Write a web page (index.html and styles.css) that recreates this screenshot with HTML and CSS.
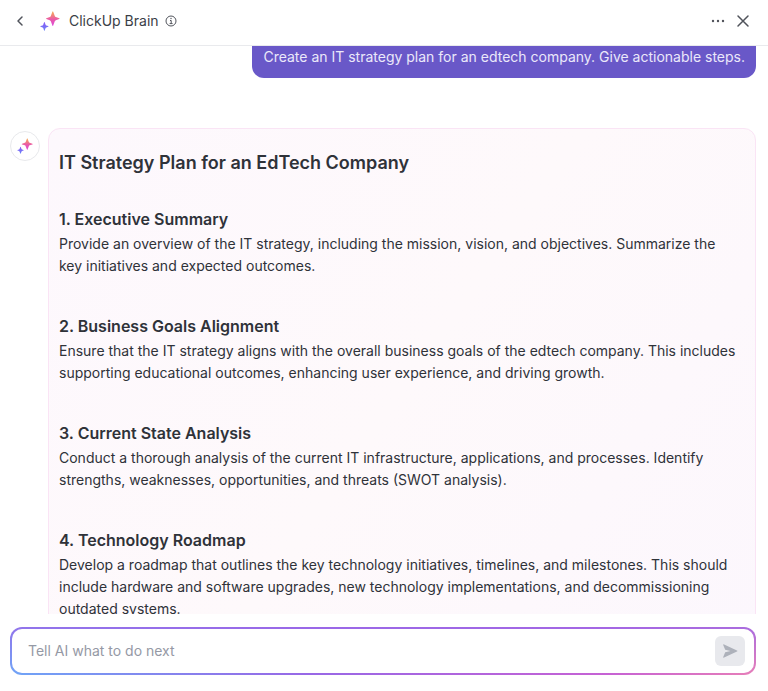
FILE: index.html
```html
<!DOCTYPE html>
<html lang="en">
<head>
    <meta charset="UTF-8">
    <meta name="viewport" content="width=device-width, initial-scale=1.0">
    <title>ClickUp Brain</title>
    <link rel="stylesheet" href="styles.css">
</head>
<body>
    <header class="panel-header">
        <button class="icon-btn" type="button" aria-label="Back">
            <svg width="16" height="16" viewBox="0 0 16 16" fill="none" stroke="currentColor" stroke-width="1.5" stroke-linecap="round" stroke-linejoin="round"><path d="M10 4 6 8l4 4"/></svg>
        </button>
        <svg class="brain-logo" width="20" height="20" viewBox="0 0 20 20" aria-hidden="true">
            <defs>
                <linearGradient id="star-warm" x1="0" y1="0" x2="0" y2="1">
                    <stop offset="0.1" stop-color="#f5a05f"/>
                    <stop offset="0.55" stop-color="#ea5aa8"/>
                    <stop offset="1" stop-color="#dd48dc"/>
                </linearGradient>
                <linearGradient id="star-cool" x1="0" y1="0" x2="0" y2="1">
                    <stop offset="0" stop-color="#8a58f5"/>
                    <stop offset="1" stop-color="#6a83f8"/>
                </linearGradient>
            </defs>
            <path fill="url(#star-warm)" d="M12.4.8q.4-1 .8 0l1.6 4.1q.3.8 1.1 1.1l3.3 1.2q1 .4 0 .8l-3.3 1.2q-.8.3-1.1 1.1l-1.6 4.1q-.4 1-.8 0l-1.6-4.1q-.3-.8-1.1-1.1L6.400 8q-1-.4 0-.8L9.700 6q.8-.3 1.100-1.100z"/>
            <path fill="url(#star-cool)" d="M4.100 11.300q.3-.7.6 0l.9 2.400q.2.500.7.700l1.800.7q.8.300 0 .600l-1.800.700q-.5.200-.7.700l-.9 2.400q-.3.700-.6 0l-.9-2.400q-.2-.5-.7-.7l-1.800-.7q-.8-.3 0-.600l1.800-.7q.5-.2.700-.700z"/>
        </svg>
        <h1 class="panel-title">ClickUp Brain</h1>
        <svg class="info-icon" width="12" height="12" viewBox="0 0 12 12" fill="none" stroke="currentColor" aria-hidden="true">
            <circle cx="6" cy="6" r="5"/>
            <path d="M5 5.500h1.200v3M4.600 8.600h3" />
            <circle cx="6" cy="3.500" r=".7" fill="currentColor" stroke="none"/>
        </svg>
        <div class="header-actions">
            <button class="icon-btn" type="button" aria-label="More options">
                <svg width="16" height="16" viewBox="0 0 16 16" fill="currentColor"><circle cx="3" cy="8" r="1.200"/><circle cx="8" cy="8" r="1.200"/><circle cx="13" cy="8" r="1.200"/></svg>
            </button>
            <button class="icon-btn" type="button" aria-label="Close">
                <svg width="16" height="16" viewBox="0 0 16 16" fill="none" stroke="currentColor" stroke-width="1.500" stroke-linecap="round"><path d="m3 3 10 10M13 3 3 13"/></svg>
            </button>
        </div>
    </header>

    <main class="chat">
        <p class="user-message">Create an IT strategy plan for an edtech company. Give actionable steps.</p>

        <div class="reply">
            <div class="avatar">
                <svg width="16" height="16" viewBox="0 0 20 20" aria-hidden="true">
                    <path fill="url(#star-warm)" d="M12.4.8q.4-1 .8 0l1.6 4.1q.3.8 1.1 1.1l3.3 1.2q1 .4 0 .8l-3.3 1.2q-.8.3-1.1 1.1l-1.6 4.1q-.4 1-.8 0l-1.6-4.1q-.3-.8-1.1-1.1L6.400 8q-1-.4 0-.8L9.700 6q.8-.3 1.100-1.100z"/>
                    <path fill="url(#star-cool)" d="M4.100 11.300q.3-.7.6 0l.9 2.400q.2.500.7.700l1.800.7q.8.300 0 .600l-1.800.700q-.5.200-.7.700l-.9 2.400q-.3.700-.6 0l-.9-2.400q-.2-.5-.7-.7l-1.800-.7q-.8-.3 0-.600l1.800-.7q.5-.2.700-.700z"/>
                </svg>
            </div>
            <article class="reply-card">
                <h2>IT Strategy Plan for an EdTech Company</h2>
                <section>
                    <h3>1. Executive Summary</h3>
                    <p>Provide an overview of the IT strategy, including the mission, vision, and objectives. Summarize the key initiatives and expected outcomes.</p>
                </section>
                <section>
                    <h3>2. Business Goals Alignment</h3>
                    <p>Ensure that the IT strategy aligns with the overall business goals of the edtech company. This includes supporting educational outcomes, enhancing user experience, and driving growth.</p>
                </section>
                <section>
                    <h3>3. Current State Analysis</h3>
                    <p>Conduct a thorough analysis of the current IT infrastructure, applications, and processes. Identify strengths, weaknesses, opportunities, and threats (SWOT analysis).</p>
                </section>
                <section>
                    <h3>4. Technology Roadmap</h3>
                    <p>Develop a roadmap that outlines the key technology initiatives, timelines, and milestones. This should include hardware and software upgrades, new technology implementations, and decommissioning outdated systems.</p>
                </section>
            </article>
        </div>
    </main>

    <form class="prompt-bar">
        <div class="prompt-box">
            <input class="prompt-input" type="text" aria-label="Tell AI what to do next" placeholder="Tell AI what to do next">
            <button class="send-btn" type="button" aria-label="Send">
                <svg width="16" height="16" viewBox="0 0 16 16" fill="currentColor"><path d="M1.300 2.300Q.8 1 2.100 1.500L15 7.400q1 .600 0 1.200L2.100 14.500Q.8 15 1.300 13.700L3.200 9.200 8.500 8 3.200 6.800z"/></svg>
            </button>
        </div>
    </form>
</body>
</html>
```
FILE: styles.css
```css
* {
    margin: 0;
    padding: 0;
    box-sizing: border-box;
}

body {
    display: flex;
    flex-direction: column;
    height: 100vh;
    font-family: Inter, "Liberation Sans", sans-serif;
    font-size: 14px;
    line-height: 22px;
    color: #2f3239;
    background-color: #fff;
}

button {
    border: none;
    background: none;
    cursor: pointer;
}

/* Header */
.panel-header {
    display: flex;
    flex-shrink: 0;
    align-items: center;
    padding: 9px 17px 12px 12px;
    border-bottom: 1px solid #e9eaed;
    color: #50535b;
}

.icon-btn {
    display: flex;
    padding: 4px 0;
    color: #50535b;
}

.brain-logo {
    margin: 0 9px 0 12px;
}

.panel-title {
    font-size: 14px;
    font-weight: 400;
    color: #3b3e46;
}

.info-icon {
    margin-left: 6px;
}

.header-actions {
    display: flex;
    gap: 9px;
    margin-left: auto;
}

/* Conversation */
.chat {
    display: flex;
    flex: 1;
    flex-direction: column;
    min-height: 0;
    padding: 0 12px 0 10px;
    overflow-y: auto;
    scrollbar-width: none;
}

.user-message {
    flex-shrink: 0;
    align-self: flex-end;
    padding: 0 11px 10px;
    border-radius: 0 0 12px 12px;
    color: #ebe8fa;
    background-color: #6958c8;
}

.reply {
    display: flex;
    flex-shrink: 0;
    gap: 8px;
    align-items: flex-start;
    margin-top: 50px;
}

.avatar {
    display: flex;
    flex-shrink: 0;
    align-items: center;
    justify-content: center;
    width: 30px;
    height: 30px;
    margin-top: 3px;
    border: 1px solid #e8e9ec;
    border-radius: 50%;
}

.reply-card {
    flex: 1;
    padding: 22px 14px 32px 10px;
    border: 1px solid #fae4f5;
    border-radius: 12px;
    background: linear-gradient(125deg, #fdf8fd, #fef9fb 50%, #fcf7fd);
}

.reply-card h2 {
    margin-bottom: 33px;
    font-size: 18px;
    font-weight: 600;
    line-height: 24px;
}

.reply-card h3 {
    margin-bottom: 3px;
    font-size: 16px;
    font-weight: 600;
}

.reply-card section + section {
    margin-top: 38px;
}

/* Prompt */
.prompt-bar {
    flex-shrink: 0;
    padding: 13px 12px 16px 10px;
}

.prompt-box {
    display: flex;
    align-items: center;
    padding: 7px 9px 7px 16px;
    border: 2px solid transparent;
    border-radius: 12px;
    background:
        linear-gradient(#fff, #fff) padding-box,
        linear-gradient(180deg, #9a68e8cc, #9a68e800) border-box,
        linear-gradient(90deg, #6fa5f7, #9868e6 40%, #c762d4 80%, #e87fb8) border-box;
}

.prompt-input {
    flex: 1;
    min-width: 0;
    border: none;
    outline: none;
    font: inherit;
    background: none;
}

.prompt-input::placeholder {
    color: #9599a5;
    opacity: 1;
}

.send-btn {
    display: flex;
    padding: 7px;
    border-radius: 6px;
    color: #adb1ba;
    background-color: #e8e9ed;
}
```
